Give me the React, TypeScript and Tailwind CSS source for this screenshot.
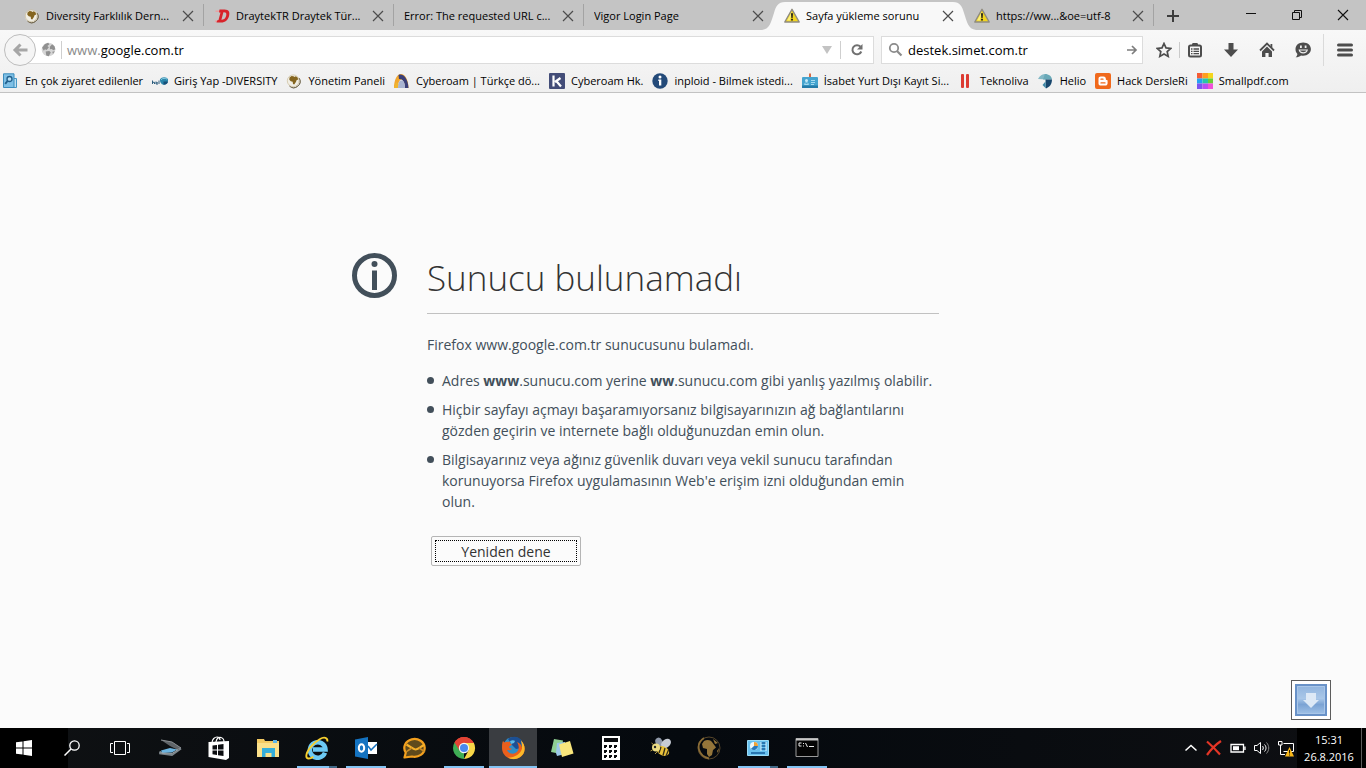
import React from "react";

type Box = { children: React.ReactNode; className?: string; view?: string };

function Svg({ children, className = "size-4", view = "0 0 16 16" }: Box) {
  return (
    <svg viewBox={view} className={`block shrink-0 ${className}`} fill="none" aria-hidden="true">
      {children}
    </svg>
  );
}

/* ---------- Favicons ---------- */

const GlobeGold = () => (
  <Svg>
    <circle cx="7.500" cy="8.200" r="6.300" fill="#f1eee4" />
    <path d="M13.200 5.200A6.300 6.300 0 0 1 3.500 13a6.300 6.300 0 0 0 9.700-7.800z" fill="#6b5f45" stroke="#6b5f45" strokeWidth=".8" />
    <circle cx="7.200" cy="7.800" r="5.900" stroke="#cbbf9d" strokeWidth=".7" />
    <path d="M3.500 4.500 5.500 3l2 .3.800.7 1.500-.8 2 1.500.2 2-1.300.3-.8 2-1.700 2.500-1.200-.5-.3-2.300-1.900-.5-1.500-1.500z" fill="#85651f" />
  </Svg>
);

const GlobeGrey = () => (
  <Svg className="size-[15px]">
    <circle cx="8" cy="8" r="7.300" fill="#d6d6d6" />
    <path d="M1.200 6 4 2.300 7.500.9 9 2.500 6.800 4.200l1.600 1.500L6 8.400 4.200 7.800 3 9.400zM9.500 5l2.300-2.600 2.600 2.200.9 3.200-2.100 1-1.800-1.400-1.900.2zM5 10l3.800-.4 1.700 1.700-2.300 3.900-2.600-.8zM12 10.500l2.600-.6-1.800 3z" fill="#909090" />
  </Svg>
);

const Draytek = () => (
  <Svg>
    <path d="M1.500 2.500h5V4h-5zM1 14h3l.6-1.500H1z" fill="#e8a2a4" />
    <path d="M5.500 1.500h5c4.500 0 5.500 2.800 4.600 6.200-1 4-3.800 6.800-8 6.800H2.500l.6-2 1.400-.6 2-7.400H5zm3.900 2.800-2 7.500c3 .3 4.300-1.900 4.800-4.200.5-2.300-.2-3.500-2.800-3.300z" fill="#d8232a" fillRule="evenodd" />
  </Svg>
);

const Warning = () => (
  <Svg>
    <path d="M8 1.300 15.200 14H.8z" fill="#f3d51e" stroke="#8f8b80" strokeWidth="1.400" strokeLinejoin="round" />
    <path d="M8 3.200 3 12.500h3z" fill="#fbf07a" />
    <path d="M7 5.300h2l-.4 4.700H7.400zM7.100 10.700h1.800v1.700H7.100z" fill="#1e1e1e" />
  </Svg>
);

const MostVisited = () => (
  <Svg>
    <path d="M9 5.500h4.500v9H9z" fill="#bfe0f2" stroke="#4596c4" />
    <path d="M.5.800h10.500v13.700H.5z" fill="#7fc0e6" stroke="#3b8cbd" />
    <circle cx="6.500" cy="6" r="2.500" fill="#b7def3" stroke="#205f8c" strokeWidth="1.300" />
    <path d="m4.500 8-2.300 2.800" stroke="#205f8c" strokeWidth="1.900" />
  </Svg>
);

const HelioSmall = () => (
  <Svg>
    <path d="M.5 7.500V11M.5 9.300H2.500V11M4 9.800h2M4 8.500V11h2M7 7.500V11" stroke="#2c5d7e" strokeWidth="1" />
    <path d="M8 6.300C9.500 3.600 15 3.500 16 6.500c.3 3-1.500 5-4.500 5.300-2.500-.8-3.700-2.600-3.500-5.500z" fill="#2b86ab" />
    <path d="M11.500 8.500H16c0 2-1.600 3.200-4.500 3.300z" fill="#164f78" />
    <path d="M9 6.700c2-1.900 4-1.700 6-.6" stroke="#8fd0e4" />
  </Svg>
);

const Arch = () => (
  <Svg>
    <path d="M0 15C0 7 3 1 7 1s7.500 6 7.500 14H11C11 9 9.500 6.500 7.500 6.500S4 10 3.800 15z" fill="#f1a62e" />
    <path d="M4.500 2C8 0 14 4 14.500 15H11C11 9 8.500 5.500 5 6z" fill="#3b3f78" />
    <path d="M4 15c.2-5 1-7.500 3.400-7.500S11 10 11 15z" fill="#a9b4d2" />
    <path d="M0 15 2 9l2.500 2-.8 4z" fill="#f0b52e" />
  </Svg>
);

const KIcon = () => (
  <Svg>
    <rect width="16" height="16" rx="1" fill="#434d78" />
    <path d="M4.500 2.500v11M11.500 5 6 9m1.500-.8 4.500 5.300" stroke="#fff" strokeWidth="2.200" />
  </Svg>
);

const Inploid = () => (
  <Svg>
    <circle cx="8" cy="8" r="7.700" fill="#234a79" />
    <circle cx="8" cy="4" r="1.500" fill="#fff" />
    <path d="M6.300 6.500h3v6H7V8h-.7z" fill="#fff" />
  </Svg>
);

const Badge = () => (
  <Svg>
    <path d="M8 .5v5" stroke="#d66b45" strokeWidth="2" />
    <rect x="0" y="4" width="16" height="11" rx="1" fill="#45a4cf" />
    <path d="M0 12.500h16V15H0z" fill="#257ca9" />
    <circle cx="4.500" cy="7.500" r="1.500" fill="#c8ebf8" />
    <path d="M2.500 11.500c.3-2.500 3.700-2.500 4 0zM9 7.500h4M9 9.500h4M9 11.500h3" stroke="#a5dbf0" />
  </Svg>
);

const Bars = () => (
  <Svg>
    <rect x="3" y="1" width="3" height="14" rx="1" fill="#dc3b32" />
    <rect x="8" y="1" width="3" height="14" rx="1" fill="#dc3b32" />
  </Svg>
);

const Helio = () => (
  <Svg>
    <path d="M0 6C2 2 5 1 8 1l1 5.500z" fill="#84b9c6" />
    <path d="M7 1c4 0 6.500 2.300 7 5.500H5z" fill="#6aa9b8" />
    <path d="M14 6.500c0 4.500-2.300 7.500-6 9l-.5-9z" fill="#17466c" />
    <path d="M7.500 8.500 8 15.500 4.500 12z" fill="#3d87a5" />
  </Svg>
);

const Blogger = () => (
  <Svg>
    <rect width="16" height="16" rx="2" fill="#f0691c" />
    <path d="M3.500 5.800c0-1.500 1-2.300 2.300-2.300h2.600c1.800 0 2.500 1.200 2.500 2.700 0 .6.3.8 1 .8.500 0 .7.300.7.700v2.600c0 1.500-1 2.300-2.300 2.300H5.800c-1.300 0-2.300-.9-2.300-2.200z" fill="#fff" />
    <path d="M6 6.200h2M6 9.900h4" stroke="#f0691c" strokeWidth="1.300" strokeLinecap="round" />
  </Svg>
);

const SmallPdf = () => (
  <Svg>
    <path d="M0 0h5.500v5.500H0z" fill="#f55b34" />
    <path d="M5.500 0H11v5.500H5.500z" fill="#ff9d1e" />
    <path d="M11 0h5v5.500h-5z" fill="#f4d41c" />
    <path d="M0 5.500h5.500v5H0z" fill="#23a2f1" />
    <path d="M5.500 5.500H11v5H5.500z" fill="#28c5a8" />
    <path d="M11 5.500h5v5h-5z" fill="#67cf35" />
    <path d="M0 10.500h5.500V16H0z" fill="#7c52f0" />
    <path d="M5.500 10.500H11V16H5.500z" fill="#b84df2" />
    <path d="M11 10.500h5V16h-5z" fill="#f24fd8" />
  </Svg>
);

/* ---------- Tabs ---------- */

type TabData = { title: string; icon?: React.ReactNode; active?: boolean; beforeActive?: boolean };

const tabs: TabData[] = [
  { title: "Diversity Farklılık Dern...", icon: <GlobeGold /> },
  { title: "DraytekTR Draytek Tür...", icon: <Draytek /> },
  { title: "Error: The requested URL c..." },
  { title: "Vigor Login Page", beforeActive: true },
  { title: "Sayfa yükleme sorunu", icon: <Warning />, active: true },
  { title: "https://ww...&oe=utf-8", icon: <Warning /> },
];

function Tab({ title, icon, active, beforeActive }: TabData) {
  const edge = active || beforeActive ? "border-transparent" : "border-[#a3a3a3]";
  return (
    <div className="relative flex h-[30px] min-w-0 max-w-[190px] flex-1 items-center pt-px pr-2.5 pl-2.5">
      {active && (
        <svg
          viewBox="0 0 214 30"
          preserveAspectRatio="none"
          className="absolute -inset-x-3 bottom-0 h-[30px] w-[calc(100%+24px)]"
          aria-hidden="true"
        >
          <path d="M0 30c8-1 9-8 12-17 2-7 4-11 11-11h168c7 0 9 4 11 11 3 9 4 16 12 17z" fill="#f8f8f8" />
        </svg>
      )}
      <button
        type="button"
        role="tab"
        aria-selected={!!active}
        className="relative flex min-w-0 flex-1 items-center gap-1.5 overflow-hidden text-left whitespace-nowrap"
      >
        {icon}
        <span>{title}</span>
      </button>
      <button type="button" aria-label={`${title} sekmesini kapat`} className="relative ml-1">
        <Svg className="size-3" view="0 0 12 12">
          <path d="m1 1 10 10M11 1 1 11" stroke="#4c4c4c" strokeWidth="1.200" />
        </Svg>
      </button>
      <span className={`absolute top-1 right-0 h-[22px] border-r ${edge}`} />
    </div>
  );
}

function TabStrip() {
  const control = "flex h-[30px] w-[46px] items-center justify-center";
  return (
    <header className="flex items-start bg-[#c4c4c4] pl-3.5">
      <div role="tablist" className="flex min-w-0 flex-1">
        {tabs.map((t) => (
          <Tab key={t.title} {...t} />
        ))}
        <button type="button" aria-label="Yeni sekme" className="flex w-[38px] items-center justify-center pt-px">
          <Svg className="size-3" view="0 0 12 12">
            <path d="M6 0v12M0 6h12" stroke="#3d3d3d" strokeWidth="2" />
          </Svg>
        </button>
      </div>
      <div className="flex">
        <button type="button" aria-label="Simge durumuna küçült" className={control}>
          <Svg className="size-3" view="0 0 12 12">
            <path d="M1 4.500h10" stroke="#111" />
          </Svg>
        </button>
        <button type="button" aria-label="Önceki boyut" className={control}>
          <Svg className="size-3" view="0 0 12 12">
            <path d="M1.500 3.500h7v7h-7zM3.500 3.500v-2h7v7h-2" stroke="#111" />
          </Svg>
        </button>
        <button type="button" aria-label="Kapat" className={control}>
          <Svg className="size-3" view="0 0 12 12">
            <path d="m1 1 10 10M11 1 1 11" stroke="#111" strokeWidth="1.100" />
          </Svg>
        </button>
      </div>
    </header>
  );
}

/* ---------- Navigation toolbar ---------- */

function NavBar() {
  const tool = "flex h-8 w-9 items-center justify-center";
  const toolNarrow = "flex h-8 w-[30px] items-center justify-center";
  return (
    <nav className="flex h-[39px] items-center pl-1">
      <button
        type="button"
        aria-label="Geri"
        className="relative z-10 flex size-8 items-center justify-center rounded-full border border-[#bdbdbd] bg-[#f5f5f5]"
      >
        <Svg>
          <path d="M15.500 8H3M8.500 2.500 3 8l5.500 5.500" stroke="#a6a6a6" strokeWidth="3" />
        </Svg>
      </button>
      <div className="-ml-4 flex h-7 min-w-0 flex-1 items-center border border-[#dcdcdc] bg-white pl-5 text-[13px]">
        <GlobeGrey />
        <span className="mx-[5px] h-[18px] border-r border-[#cfcfcf]" />
        <label htmlFor="address" className="text-[#8a8a8a]">
          www.
        </label>
        <input
          id="address"
          type="text"
          defaultValue="google.com.tr"
          className="min-w-0 flex-1 bg-transparent text-black outline-none"
        />
        <button type="button" aria-label="Geçmişi göster" className="px-2">
          <Svg className="h-2 w-2.5" view="0 0 10 8">
            <path d="M0 0h10L5 8z" fill="#c3c3c3" />
          </Svg>
        </button>
        <span className="h-[18px] border-r border-[#cfcfcf]" />
        <button type="button" aria-label="Yenile" className="flex h-6 w-8 items-center justify-center">
          <Svg className="size-3.5" view="0 0 14 14">
            <path d="M10.500 3.700A4.600 4.600 0 1 0 11.300 8.500" stroke="#707070" strokeWidth="2" />
            <path d="M12.500 1v5.500H7z" fill="#707070" />
          </Svg>
        </button>
      </div>
      <div className="ml-[7px] flex h-7 w-[262px] items-center border border-[#dcdcdc] bg-white pl-1.5 text-[13px]">
        <Svg>
          <circle cx="6" cy="6" r="4.200" stroke="#8b8b8b" strokeWidth="1.800" />
          <path d="m9 9 4.500 4.500" stroke="#8b8b8b" strokeWidth="2.200" />
        </Svg>
        <input
          aria-label="Ara"
          type="text"
          defaultValue="destek.simet.com.tr"
          className="ml-1 min-w-0 flex-1 bg-transparent text-black outline-none"
        />
        <button type="button" aria-label="Aramayı başlat" className="px-1">
          <Svg className="size-3" view="0 0 12 12">
            <path d="M1 6h9M6 2l4 4-4 4" stroke="#7d7d7d" strokeWidth="1.700" />
          </Svg>
        </button>
      </div>
      <button type="button" aria-label="Yer imlerine ekle" className={`${toolNarrow} ml-1.5`}>
        <Svg>
          <path d="m8 1.500 2 4.400 4.800.5-3.600 3.200 1 4.800L8 12l-4.200 2.400 1-4.800L1.200 6.400 6 5.900z" stroke="#4d4d4d" strokeWidth="1.700" />
        </Svg>
      </button>
      <span className="h-4 border-r border-[#cacaca]" />
      <button type="button" aria-label="Yer imleri" className={`${toolNarrow} mr-[3px]`}>
        <Svg>
          <rect x="2" y="3.500" width="12" height="11" rx="1.500" stroke="#4d4d4d" strokeWidth="2" />
          <path d="M5 4V2.500c0-1 .5-1.500 1.500-1.500h3c1 0 1.500.5 1.500 1.500V4z" fill="#4d4d4d" />
          <path d="M4 7h1.500M6.500 7H12M4 9.300h1.500M6.500 9.300H12M4 11.600h1.500M6.500 11.600H12" stroke="#4d4d4d" strokeWidth="1.300" />
        </Svg>
      </button>
      <button type="button" aria-label="İndirmeler" className={tool}>
        <Svg>
          <path d="M5.500 1h5v6.500H15L8 15 1 7.500h4.500z" fill="#4d4d4d" />
        </Svg>
      </button>
      <button type="button" aria-label="Giriş sayfası" className={tool}>
        <Svg>
          <path d="m1 8.500 7-7 7 7" stroke="#4d4d4d" strokeWidth="1.800" />
          <path d="m8 4.500 5 5V15H9.600v-4H6.400v4H3V9.500zM11.500 2h1.800v4l-1.800-1.800z" fill="#4d4d4d" />
        </Svg>
      </button>
      <button type="button" aria-label="Sohbet" className={tool}>
        <Svg>
          <path d="M8.200.500c4.500 0 7.700 2.800 7.700 6.600 0 3.900-3.200 6.700-7.700 6.700-.8 0-1.500-.1-2.200-.3C4.800 14.600 3 15.300.6 15.300c1-.8 1.600-2.100 1.800-3.400C1 10.700.5 9.100.5 7.100.5 3.300 3.700.5 8.200.5z" fill="#4d4d4d" />
          <path d="M5 3.500h1.800V6H5zM9.700 3.500h1.800V6H9.700z" fill="#f0f0f0" />
          <path d="M3.500 7.500h9.500C12.500 10.200 10.700 11.500 8.200 11.500S4 10.200 3.500 7.500z" fill="#f0f0f0" />
          <path d="M5 8.600h6.500c-.5 1-1.700 1.700-3.300 1.700S5.500 9.600 5 8.600z" fill="#4d4d4d" />
        </Svg>
      </button>
      <span className="ml-0.5 h-8 border-r border-[#dadada]" />
      <button type="button" aria-label="Menü" className="flex h-8 w-[42px] items-center justify-center">
        <Svg>
          <path d="M1.500 3h13M1.500 8h13M1.500 13h13" stroke="#4d4d4d" strokeWidth="3" strokeLinecap="round" />
        </Svg>
      </button>
    </nav>
  );
}

const bookmarks = [
  { label: "En çok ziyaret edilenler", icon: <MostVisited /> },
  { label: "Giriş Yap -DIVERSITY", icon: <HelioSmall /> },
  { label: "Yönetim Paneli", icon: <GlobeGold /> },
  { label: "Cyberoam | Türkçe dö...", icon: <Arch /> },
  { label: "Cyberoam Hk.", icon: <KIcon /> },
  { label: "inploid - Bilmek istedi...", icon: <Inploid /> },
  { label: "İsabet Yurt Dışı Kayıt Si...", icon: <Badge /> },
  { label: "Teknoliva", icon: <Bars /> },
  { label: "Helio", icon: <Helio /> },
  { label: "Hack DersleRi", icon: <Blogger /> },
  { label: "Smallpdf.com", icon: <SmallPdf /> },
];

function BookmarkBar() {
  return (
    <div className="flex h-6 items-center gap-[9px] overflow-hidden border-b border-[#c2c2c2] pl-[3px]">
      {bookmarks.map((b) => (
        <a key={b.label} href="#" className="flex shrink-0 items-center gap-[6px] whitespace-nowrap">
          {b.icon}
          {b.label}
        </a>
      ))}
    </div>
  );
}

/* ---------- Error page ---------- */

function Item({ children }: { children: React.ReactNode }) {
  return (
    <li className="flex items-start gap-2">
      <span className="mt-[7px] size-[7px] shrink-0 rounded-full bg-[#424f5a]" />
      <span>{children}</span>
    </li>
  );
}

function ErrorPage() {
  return (
    <main className="relative flex flex-1 items-center justify-center bg-[#fbfbfb] pb-0.5 text-sm leading-[21px] text-[#424f5a]">
      <div className="flex w-full max-w-[662px] items-start pr-[75px]">
        <Svg className="mr-[30px] size-[45px]" view="0 0 45 45">
          <circle cx="22.500" cy="22.500" r="20" stroke="#424f5a" strokeWidth="5" />
          <circle cx="22.500" cy="11" r="3" fill="#424f5a" />
          <path d="M20 17.500h5V37h-5z" fill="#424f5a" />
        </Svg>
        <div className="min-w-0 flex-1">
          <h1 className="border-b border-[#c1c1c1] pb-2.5 text-[35px] leading-[50px] font-light text-[#333]">
            Sunucu bulunamadı
          </h1>
          <p className="mt-5">Firefox www.google.com.tr sunucusunu bulamadı.</p>
          <ul className="mt-[15px] flex flex-col gap-2">
            <Item>
              Adres <strong>www</strong>.sunucu.com yerine <strong>ww</strong>.sunucu.com gibi yanlış yazılmış olabilir.
            </Item>
            <Item>
              Hiçbir sayfayı açmayı başaramıyorsanız bilgisayarınızın ağ bağlantılarını gözden geçirin ve internete
              bağlı olduğunuzdan emin olun.
            </Item>
            <Item>
              Bilgisayarınız veya ağınız güvenlik duvarı veya vekil sunucu tarafından korunuyorsa Firefox
              uygulamasının Web'e erişim izni olduğundan emin olun.
            </Item>
          </ul>
          <button
            type="button"
            className="mt-6 ml-1 flex h-[30px] w-[150px] rounded-xs border border-[#b5b5b5] bg-[#fbfbfb] p-[3px] text-[#333]"
          >
            <span className="flex h-full w-full items-center justify-center border border-dotted border-black">
              Yeniden dene
            </span>
          </button>
        </div>
      </div>
      <button
        type="button"
        aria-label="Aşağı kaydır"
        className="absolute right-[35px] bottom-2 flex size-10 items-center justify-center border border-[#5c5c5c] bg-white"
      >
        <Svg className="size-8" view="0 0 32 32">
          <defs>
            <linearGradient id="down" x1="0" y1="0" x2="0" y2="1">
              <stop offset="0" stopColor="#8fb3de" />
              <stop offset=".45" stopColor="#a9c7e8" />
              <stop offset=".65" stopColor="#7ba3d4" />
              <stop offset="1" stopColor="#a3c4e8" />
            </linearGradient>
          </defs>
          <path d="M1 1h30v30H1z" fill="url(#down)" stroke="#6992c8" strokeWidth="2" />
          <path d="M2.500 2.500h27v27h-27z" stroke="#a9c6e8" />
          <path d="M11 9h10v7h3l-8 8-8-8h3z" fill="#dde9f6" />
        </Svg>
      </button>
    </main>
  );
}

/* ---------- Taskbar ---------- */

const big = "size-6";
const v24 = "0 0 24 24";

const apps: { name: string; icon: React.ReactNode; open?: boolean; focused?: boolean; stacked?: boolean }[] = [
  {
    name: "Tarayıcı",
    icon: (
      <Svg className={big} view={v24}>
        <path d="M3 4 14 6l9 6-5 1-6-3z" fill="#5f6468" />
        <path d="M3 4 14 6l9 6-5 1.500" stroke="#8b9094" />
        <path d="M3 14.500 12 12l7 1.500-5 3-10 .5z" fill="#6cb4e0" />
        <path d="M2 15.500v2l12 1.500 9-6.500" stroke="#7c858b" strokeWidth="1.800" />
        <path d="M2 15.500 4 17l10 .500 6-4" stroke="#b2b9bd" strokeWidth=".8" />
      </Svg>
    ),
  },
  {
    name: "Mağaza",
    icon: (
      <Svg className={big} view={v24}>
        <path d="M5 7c0-4 3-6 5-6s3 1 3 3M9 6c.5-4 3-5 5-4.500S17 4 17 6" stroke="#fff" strokeWidth="1.200" />
        <path d="m1.500 6 20.500-1v17l-3 2-17.500-3z" fill="#fff" />
        <path d="m5.500 9.500 4.500-.6v4.600H5.500zM11 8.800l5.500-.8v5.500H11zM5.500 14.500H10v4.600l-4.500-.8zM11 14.500h5.500V20L11 19.300z" fill="#0b0d10" />
      </Svg>
    ),
  },
  {
    name: "Dosya Gezgini",
    icon: (
      <Svg className={big} view={v24}>
        <path d="M1 3h7l1 2h14v16H1z" fill="#f3ca63" />
        <path d="M1 7h22v14H1z" fill="#fbe08a" />
        <path d="M17 4h4v3h-4z" fill="#5db6e8" />
        <path d="M6 21v-9h13v9h-3.500v-4h-6v4z" fill="#35aeda" />
      </Svg>
    ),
  },
  {
    name: "Internet Explorer",
    open: true,
    stacked: true,
    icon: (
      <Svg className={big} view={v24}>
        <path d="M20 16.800A7.800 7.800 0 1 1 20.500 13.500H8" stroke="#6ccaf4" strokeWidth="4.500" />
        <path d="M22.300 5.500C23 1.500 19 .5 15 3 8 7 1.500 15 1.300 20c0 3.500 4 3 7 .8" stroke="#f6cf2f" strokeWidth="1.900" />
      </Svg>
    ),
  },
  {
    name: "Outlook",
    open: true,
    icon: (
      <Svg className={big} view={v24}>
        <path d="M13 6h10v12H13z" fill="#fff" />
        <path d="m14 10 3 4 6-6" stroke="#1671bd" strokeWidth="1.500" />
        <path d="M1 3.500 14 1v22L1 20.500z" fill="#1473c1" />
        <ellipse cx="7.500" cy="12" rx="2.700" ry="3.700" stroke="#fff" strokeWidth="2" />
      </Svg>
    ),
  },
  {
    name: "eM Client",
    icon: (
      <Svg className={big} view={v24}>
        <path d="M2.800 16.500A10.200 8.900 0 1 1 9 20.500L1.500 21.500z" fill="#5f4a1c" stroke="#f3a01e" strokeWidth="2.200" strokeLinejoin="round" />
        <path d="M3.500 8.500C8 11 10 13.500 12.500 13.500S17.500 11 21.500 8.500" stroke="#f5b02a" strokeWidth="2.200" />
        <path d="M3 16c2.500-2 4-3 6-4M22 16c-2.500-2-4-3-6-4" stroke="#c98b26" strokeWidth="1.500" />
      </Svg>
    ),
  },
  {
    name: "Chrome",
    open: true,
    icon: (
      <Svg className={big} view={v24}>
        <path d="M12 12 2.500 6.500A11 11 0 0 1 21.500 6.500z" fill="#e34435" />
        <path d="M12 12v11A11 11 0 0 1 2.500 6.500z" fill="#3fae55" />
        <path d="M12 6.800h9.800A11 11 0 0 1 12 23l4.500-8.500z" fill="#f8d748" />
        <path d="M2.500 6.500 7.500 14.600 12 12V7h9.700l-.2-.5A11 11 0 0 0 2.500 6.500z" fill="#e34435" />
        <circle cx="12" cy="12" r="5.200" fill="#f5f5f5" />
        <circle cx="12" cy="12" r="4" fill="#4888ef" />
      </Svg>
    ),
  },
  {
    name: "Firefox",
    open: true,
    focused: true,
    icon: (
      <Svg className={big} view={v24}>
        <circle cx="12.500" cy="11.500" r="10.500" fill="#2f8ec9" />
        <path d="M7 3c4-3 10-3 13 1l1 8-6 1-4-4z" fill="#1c4f93" />
        <path d="M9 5c2-1 4-1 5 0l-1 2-3 1z" fill="#5bb7e4" />
        <path d="M2 5 3.500 6.500C5 5.500 6.500 5.500 8 6l1-1c-.5 2 .5 3 2 3.500-1 1-2 1.500-3 2 0 2 1.500 2 3 2-1.500 2.500-4 1.500-5 1.500 2 5 9 4.500 11 .5 1.500-3 .5-6-1-8.500 3 1 4.500 3 5 5.500.5-2 0-5-1-7 4 4 4.500 9 2.500 13A11.500 11.500 0 0 1 12.500 23.200C6 23.200 1 18 1 12c0-3 0-5 1-7z" fill="#ea5f1c" />
        <path d="M20 4.500c4 4 4.500 9 2.500 13-2 3.500-6 5.600-10 5.600-2 0-4-.5-5.500-1.500 7 0 13-4 14-9.100 0-3-.200-5.500-1-8z" fill="#fbb829" />
      </Svg>
    ),
  },
  {
    name: "Yapışkan Notlar",
    icon: (
      <Svg className={big} view={v24}>
        <path d="m4 3 9 1.500L11 18l-10-2z" fill="#8fcf93" />
        <path d="m7 7 8-1v12l-8 2-1-3z" fill="#9cc8e8" />
        <path d="m9 8.500 11-3.500 3.500 12.500L12 21z" fill="#f9e67c" />
      </Svg>
    ),
  },
  {
    name: "Hesap Makinesi",
    icon: (
      <Svg className={big} view={v24}>
        <path d="M3 0h18v24H3z" fill="#fff" />
        <path d="M5 2h14v4H5z" fill="#0a0c0f" />
        <path d="M5 9h3v2H7v1H5zM10 9h3v2h-1v1h-2zM15 9h3v2h-1v1h-2zM5 14h3v2H7v1H5zM10 14h3v2h-1v1h-2zM15 14h3v2h-1v1h-2zM5 19h3v2H7v1H5zM10 19h3v2h-1v1h-2zM15 19h3v2h-1v1h-2z" fill="#0a0c0f" />
      </Svg>
    ),
  },
  {
    name: "Arı",
    icon: (
      <Svg className={big} view={v24}>
        <ellipse cx="11" cy="6" rx="3.500" ry="4.500" transform="rotate(-25 11 6)" fill="#8f98a8" />
        <ellipse cx="18" cy="7.500" rx="5.500" ry="4" transform="rotate(-40 18 7.500)" fill="#c7ccd5" />
        <ellipse cx="15" cy="15" rx="6.500" ry="4.500" transform="rotate(25 15 15)" fill="#e9c23b" />
        <path d="m13 11-2 6M17 12l-2 7.500M20.500 14l-2.500 6" stroke="#312a18" strokeWidth="1.300" />
        <circle cx="8" cy="11.500" r="4" fill="#ecdc84" />
        <circle cx="7" cy="11" r="1.200" fill="#222" />
        <path d="M5.500 8.500 3.500 7M4.500 14l-2 1M9 16l-2 2" stroke="#a88f3d" />
      </Svg>
    ),
  },
  {
    name: "Dünya",
    icon: (
      <Svg className={big} view={v24}>
        <circle cx="12" cy="12" r="11" stroke="#57462a" strokeWidth="1" />
        <path d="M7 2C-2 8 1 20 12 22.500" stroke="#8a6c36" strokeWidth="1.800" />
        <path d="M7 5c3-2 7-1 8 1l3 4 1 1.500-3 2.500-1 5-3 2-2-3v-5l-4-1-1-4z" fill="#94753a" />
        <path d="m16 3 5 4-3 1zM20 15l2-3-1 5z" fill="#94753a" />
      </Svg>
    ),
  },
  {
    name: "Denetim Masası",
    open: true,
    stacked: true,
    icon: (
      <Svg className={big} view={v24}>
        <path d="M1.500 4.500h21v15h-21z" fill="#68c0ee" stroke="#9bdcf7" />
        <circle cx="8" cy="10" r="4" fill="#eef8fc" />
        <path d="M8 10V6a4 4 0 0 1 4 4z" fill="#f0a238" />
        <path d="M8 10h4a4 4 0 0 1-7 2.700z" fill="#2878bc" />
        <path d="M15 7h5M15 10h5M15 13h5M5 17h14" stroke="#145e9d" strokeWidth="1.500" />
        <path d="M15 6v9M20 6v9" stroke="#d8f1fd" />
      </Svg>
    ),
  },
  {
    name: "Komut İstemi",
    open: true,
    icon: (
      <Svg className={big} view={v24}>
        <path d="M1 2.500h22v18H1z" fill="#050505" stroke="#9b9b9b" />
        <path d="M1 3.500h22" stroke="#c8c8c8" strokeWidth="2" />
        <path d="M6.500 7H4v3h2.500M8.500 7v1M8.500 9.500v1M10.500 7l2 4M14 10.500h5" stroke="#ededed" />
      </Svg>
    ),
  },
];

function Taskbar() {
  const slot = "flex h-10 w-12 shrink-0 items-center justify-center";
  return (
    <footer className="flex h-10 items-center bg-linear-to-r from-[#0f1113] via-[#05090e] to-[#0e0f12] text-white">
      <div className="flex w-[68px] shrink-0 bg-black">
        <button type="button" aria-label="Başlat" className={slot}>
          <Svg>
            <path d="m0 2.300 6.500-.9v6.100H0zM7.500 1.200 16 0v7.500H7.500zM0 8.500h6.500v6.100L0 13.700zM7.500 8.500H16V16l-8.500-1.200z" fill="#fff" />
          </Svg>
        </button>
      </div>
      <button type="button" aria-label="Ara" className={`${slot} -ml-5`}>
        <Svg>
          <circle cx="10.500" cy="5.500" r="4.700" stroke="#fff" strokeWidth="1.300" />
          <path d="M7 9 .5 15.500" stroke="#fff" strokeWidth="1.500" />
        </Svg>
      </button>
      <button type="button" aria-label="Görev görünümü" className={slot}>
        <Svg className="h-4 w-5" view="0 0 20 16">
          <path d="M4.500 1.500h11v13h-11zM3 3.500H.5v9H3M17 3.500h2.500v9H17" stroke="#fff" />
        </Svg>
      </button>
      <div className="ml-0.5 flex gap-px">
        {apps.map((a) => (
          <button
            key={a.name}
            type="button"
            aria-label={a.name}
            className={`relative ${slot} ${a.focused ? "bg-[#3a3d41]" : ""}`}
          >
            {a.icon}
            {a.open && (
              <span
                className={`absolute bottom-0 h-0.5 bg-[#83c3f3] ${a.focused ? "inset-x-0" : "inset-x-1"} ${
                  a.stacked ? "border-r-8 border-[#426987]" : ""
                }`}
              />
            )}
          </button>
        ))}
      </div>
      <div className="ml-auto flex items-center gap-2">
        <button type="button" aria-label="Gizli simgeleri göster">
          <Svg className="h-4 w-3.5" view="0 0 14 16">
            <path d="m1.500 10.500 5.500-5 5.500 5" stroke="#fff" strokeWidth="1.500" />
          </Svg>
        </button>
        <button type="button" aria-label="Bağlantı kesildi">
          <Svg>
            <path d="M1 1.500c4.500 4 9 8.500 13 13M15 1C9 5 4.500 10 1 15" stroke="#e33526" strokeWidth="2.200" />
          </Svg>
        </button>
        <button type="button" aria-label="Pil">
          <Svg>
            <path d="M1 4.500h12.500v7.500H1zM15 6.500v3.500" stroke="#fff" strokeWidth="1.300" />
            <path d="M3 6.200h6v4H3z" fill="#fff" />
          </Svg>
        </button>
        <button type="button" aria-label="Ses">
          <Svg>
            <path d="M.5 5.500H3L6.500 2.500v11L3 10.500H.5z" stroke="#fff" />
            <path d="M8.500 6c1 1 1 3 0 4M10.500 4.500c2 2 2 5 0 7" stroke="#fff" />
            <path d="M12.500 2.500c3 3.500 3 7.500 0 11" stroke="#8b8b8b" />
          </Svg>
        </button>
        <button type="button" aria-label="Ağ uyarısı" className="mt-0.5">
          <Svg>
            <path d="M5.500 2.500h10v8h-10M.5.500h3.500v3.500H.5zM2.500 4v9.500H7" stroke="#fff" />
            <path d="m11.500 6 4.500 9.500H7z" fill="#f8b719" />
            <path d="M11.500 9v3.500M11.500 13.500v1" stroke="#2b2100" />
          </Svg>
        </button>
        <button
          type="button"
          className="-ml-[5px] flex h-10 w-[69px] items-center justify-center bg-black pr-1 text-center leading-[17px]"
        >
          <span className="flex h-full flex-1 flex-col justify-center border-r border-[#5b5b5b]">
            <time>15:31</time>
            <time dateTime="2016-08-26">26.8.2016</time>
          </span>
        </button>
      </div>
    </footer>
  );
}

export default function App() {
  return (
    <div className="flex min-h-screen flex-col font-['Open_Sans','Noto_Sans',sans-serif] text-[11px] leading-4 text-black">
      <TabStrip />
      <div className="bg-linear-to-b from-[#f8f8f8] to-[#efefef]">
        <NavBar />
        <BookmarkBar />
      </div>
      <ErrorPage />
      <Taskbar />
    </div>
  );
}
